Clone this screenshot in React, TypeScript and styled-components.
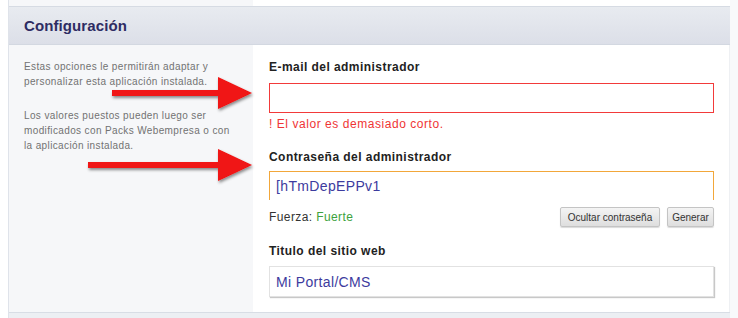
import React from 'react';
import styled, { createGlobalStyle } from 'styled-components';

const GlobalStyle = createGlobalStyle`
  html, body {
    margin: 0;
    padding: 0;
    background: #ffffff;
    font-family: "Liberation Sans", Arial, sans-serif;
  }
`;

const Page = styled.div`
  position: relative;
  width: 738px;
  height: 318px;
  overflow: hidden;
  padding-left: 8px;
  box-sizing: border-box;
  background: linear-gradient(to right, #ffffff 730px, #f8f9fb 730px);
`;

const Panel = styled.div`
  width: 722px;
  border-left: 1px solid #dfe3ea;
  box-sizing: border-box;
`;

const TopBand = styled.div`
  display: grid;
  grid-template-columns: 244px 1fr;
  height: 6px;
`;

const BandCell = styled.div<{ $light?: boolean }>`
  background: ${(p) => (p.$light ? '#f6f7f9' : '#ffffff')};
`;

const Header = styled.div`
  height: 37px;
  display: flex;
  align-items: center;
  padding-left: 15px;
  border-top: 1px solid #d6dbe3;
  border-bottom: 1px solid #d3d8e1;
  background: linear-gradient(to bottom, #e8ebf0, #dcdfe8);
`;

const Title = styled.h2`
  margin: 0;
  font-size: 15px;
  font-weight: bold;
  color: #2e2c63;
  letter-spacing: 0.1px;
`;

const Body = styled.div`
  display: grid;
  grid-template-columns: 244px 1fr;
  height: 267px;
`;

const Side = styled.div`
  background: #f6f7f9;
  padding: 14px 6px 0 15px;
`;

const SideText = styled.p`
  margin: 0 0 19px;
  font-size: 10px;
  line-height: 15px;
  color: #727272;
  letter-spacing: 0.37px;
  white-space: nowrap;
`;

const Main = styled.div`
  background: #ffffff;
  padding: 15px 15px 0 16px;
  border-right: 1px solid #eef0f3;
`;

const Label = styled.div<{ $mt?: number }>`
  margin-top: ${(p) => p.$mt ?? 0}px;
  font-size: 12px;
  line-height: 14px;
  font-weight: bold;
  color: #222222;
  letter-spacing: 0.45px;
`;

const toneBorder = { error: '#f23a3a', focus: '#f2a73a', plain: '#e2e2e2' };

const Input = styled.div<{ $tone: 'error' | 'focus' | 'plain'; $mt: number; $h: number }>`
  margin-top: ${(p) => p.$mt}px;
  height: ${(p) => p.$h}px;
  box-sizing: border-box;
  display: flex;
  align-items: center;
  padding-left: 6px;
  font-size: 14px;
  letter-spacing: 0.35px;
  color: #3d3b9e;
  background: #ffffff;
  border-style: solid;
  border-width: ${(p) => (p.$tone === 'focus' ? '1px 1px 0 1px' : '1px')};
  border-color: ${(p) => toneBorder[p.$tone]};
  box-shadow: ${(p) => (p.$tone === 'plain' ? '1px 1px 1px #c8c8c8' : 'none')};
`;

const ErrorText = styled.div`
  margin-top: 4px;
  font-size: 12px;
  line-height: 14px;
  color: #ef3535;
  letter-spacing: 0.55px;
`;

const StrengthRow = styled.div`
  margin-top: 7px;
  height: 20px;
  display: flex;
  align-items: center;
  gap: 7px;
`;

const Strength = styled.span`
  flex: 1;
  font-size: 12px;
  letter-spacing: 0.4px;
  color: #333333;
`;

const Good = styled.span`
  color: #3da23d;
`;

const Button = styled.button<{ $w: number }>`
  width: ${(p) => p.$w}px;
  height: 20px;
  padding: 0;
  font-family: "Liberation Sans", Arial, sans-serif;
  font-size: 10px;
  color: #333333;
  border: 1px solid #c4c4c4;
  border-radius: 2px;
  background: linear-gradient(to bottom, #f4f4f4, #dedede);
  box-shadow: 0 1px 1px rgba(0, 0, 0, 0.15);
`;

const Footer = styled.div`
  height: 5px;
  border-top: 1px solid #d8dde5;
  background: #eceff3;
`;

const Arrow = styled.svg<{ $top: number; $left: number }>`
  position: absolute;
  top: ${(p) => p.$top}px;
  left: ${(p) => p.$left}px;
  overflow: visible;
`;

function RedArrow({ top, left, length }: { top: number; left: number; length: number }) {
  const head = 34;
  return (
    <Arrow $top={top} $left={left} width={length} height={32} viewBox={`0 0 ${length} 32`}>
      <defs>
        <filter id={`sh${top}`} x="-10%" y="-30%" width="130%" height="180%">
          <feDropShadow dx="1" dy="2" stdDeviation="1.5" floodColor="#000" floodOpacity="0.45" />
        </filter>
      </defs>
      <path
        d={`M0 13 H${length - head} V0 L${length} 16 L${length - head} 32 V19 H0 Z`}
        fill="#f01212"
        filter={`url(#sh${top})`}
      />
    </Arrow>
  );
}

export default function App() {
  return (
    <>
      <GlobalStyle />
      <Page>
        <Panel>
          <TopBand>
            <BandCell $light />
            <BandCell />
          </TopBand>
          <Header>
            <Title>Configuración</Title>
          </Header>
          <Body>
            <Side>
              <SideText>
                Estas opciones le permitirán adaptar y<br />
                personalizar esta aplicación instalada.
              </SideText>
              <SideText>
                Los valores puestos pueden luego ser<br />
                modificados con Packs Webempresa o con<br />
                la aplicación instalada.
              </SideText>
            </Side>
            <Main>
              <Label>E-mail del administrador</Label>
              <Input $tone="error" $mt={9} $h={30} />
              <ErrorText>! El valor es demasiado corto.</ErrorText>
              <Label $mt={19}>Contraseña del administrador</Label>
              <Input $tone="focus" $mt={7} $h={29}>[hTmDepEPPv1</Input>
              <StrengthRow>
                <Strength>
                  Fuerza: <Good>Fuerte</Good>
                </Strength>
                <Button $w={100}>Ocultar contraseña</Button>
                <Button $w={47}>Generar</Button>
              </StrengthRow>
              <Label $mt={17}>Titulo del sitio web</Label>
              <Input $tone="plain" $mt={8} $h={31}>Mi Portal/CMS</Input>
            </Main>
          </Body>
          <Footer />
        </Panel>
        <RedArrow top={77} left={112} length={140} />
        <RedArrow top={149} left={88} length={164} />
      </Page>
    </>
  );
}
